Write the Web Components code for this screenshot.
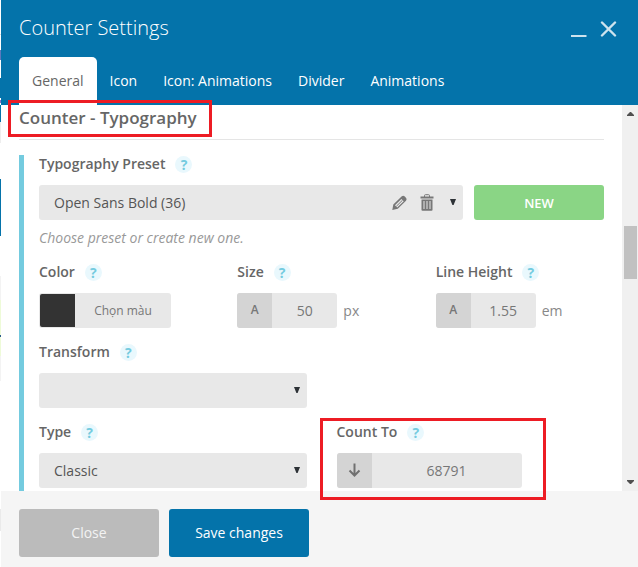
<!DOCTYPE html>
<html lang="en">
<head>
<meta charset="utf-8">
<title>Counter Settings</title>
<style>
  html, body { margin: 0; height: 100%; }
  body { font: 14px/18px "Open Sans", "Noto Sans", sans-serif; color: #666; background: #fff; }
</style>
</head>
<body>
<settings-dialog>
  <dialog-header slot="header" heading="Counter Settings">
    <dialog-tab selected>General</dialog-tab>
    <dialog-tab>Icon</dialog-tab>
    <dialog-tab>Icon: Animations</dialog-tab>
    <dialog-tab>Divider</dialog-tab>
    <dialog-tab>Animations</dialog-tab>
  </dialog-header>

  <field-section heading="Counter - Typography">
    <preset-field label="Typography Preset" value="Open Sans Bold (36)" hint="Choose preset or create new one."></preset-field>
    <field-row columns="3">
      <color-field label="Color" value="#333333" action="Chọn màu"></color-field>
      <number-field label="Size" value="50" unit="px" icon="letter"></number-field>
      <number-field label="Line Height" value="1.55" unit="em" icon="letter"></number-field>
    </field-row>
    <field-row columns="2">
      <select-field label="Transform" value=""></select-field>
    </field-row>
    <field-row columns="2">
      <select-field label="Type" value="Classic"></select-field>
      <number-field label="Count To" value="68791" icon="arrow" wide></number-field>
    </field-row>
  </field-section>

  <dialog-footer slot="footer">
    <push-button kind="muted">Close</push-button>
    <push-button kind="primary">Save changes</push-button>
  </dialog-footer>
</settings-dialog>

<script>
const FIELD_CSS = `
  :host { display: block; min-width: 0; }
  * { box-sizing: border-box; }
  .head { display: flex; align-items: center; gap: 10px; height: 18px; margin-bottom: 12px; }
  label { font-weight: 600; color: #666; white-space: nowrap; }
  input, select, button { font: inherit; color: inherit; margin: 0; border: 0; padding: 0; background: none; outline: none; }
  button { cursor: pointer; }
  svg { display: block; }
  .select { display: grid; grid-template-columns: minmax(0, 1fr) auto; align-items: center; height: 35px; border-radius: 3px; background: #e8e8e8; }
  .select > * { grid-row: 1; }
  .select select { grid-column: 1 / -1; width: 100%; height: 35px; padding: 0 75px 0 15px; appearance: none; color: #555; cursor: pointer; }
  .select .tools { grid-column: 2; display: flex; align-items: center; gap: 13px; padding-right: 7px; }
  .select .caret { pointer-events: none; margin: 0 0 2px 3px; }
`;
const CARET = `<svg class="caret" width="6" height="6" viewBox="0 0 6 6"><path d="M0 0h6L3.6 6H2.4z" fill="#2d3236"/></svg>`;

const define = (name, render) => customElements.define(name, class extends HTMLElement {
  constructor() {
    super();
    this.attachShadow({ mode: "open" });
  }
  connectedCallback() {
    const t = document.createElement("template");
    t.innerHTML = render(this, n => this.getAttribute(n) ?? "");
    this.shadowRoot.replaceChildren(t.content.cloneNode(true));
  }
});

define("settings-dialog", () => `
  <style>
    :host { display: grid; grid-template-columns: 1px minmax(0, 1fr); height: 100vh; position: relative; overflow: hidden; }
    .backdrop { background: linear-gradient(#fff 34px, #ddd 34px 35px, #fff 35px 50px, #5c78bd 50px 60px, #fff 60px 78px, #0473aa 78px 98px, #fff 98px 100px, #8f6fc0 100px 103px, #fff 103px 105px, #0473aa 105px 122px, #eee 122px 143px, #fff 143px 179px, #0473aa 179px 236px, #fff 236px 276px, #f3f3f3 276px 300px, #eefbd8 300px 335px, #2a5b8c 335px 337px, #eefbd8 337px 356px, #f3f3f3 356px 381px, #fff 381px 509px, #eaeaea 509px 531px, #fff 531px); }
    .frame { display: flex; flex-direction: column; min-height: 0; }
    .body { flex: 1; min-height: 0; display: flex; background: #fff; }
    .content { flex: 1; min-width: 0; overflow: hidden; }
  </style>
  <div class="backdrop"></div>
  <div class="frame">
    <slot name="header"></slot>
    <div class="body">
      <div class="content"><slot></slot></div>
      <scroll-rail></scroll-rail>
    </div>
    <slot name="footer"></slot>
  </div>
  <highlight-box style="left:8px;top:100px;width:204px;height:37px"></highlight-box>
  <highlight-box style="left:320px;top:418px;width:226px;height:82px"></highlight-box>
`);

define("highlight-box", () => `
  <style>:host { position: absolute; box-sizing: border-box; border: 3px solid #ed1c24; pointer-events: none; }</style>
`);

define("dialog-header", (el, a) => `
  <style>
    :host { display: block; background: #0473aa; color: #fff; }
    .bar { display: flex; justify-content: space-between; align-items: center; height: 56px; padding: 0 21px 1px 18px; }
    h1 { margin: 0; font-size: 20px; line-height: 28px; font-weight: 300; color: #fff; }
    .actions { display: flex; gap: 13px; padding-top: 2px; }
    button { display: block; border: 0; padding: 0; background: none; cursor: pointer; }
    svg { display: block; }
    nav { display: flex; padding: 0 18px; }
  </style>
  <div class="bar">
    <h1>${a("heading")}</h1>
    <div class="actions">
      <button type="button" aria-label="Minimize"><svg width="17" height="17" viewBox="0 0 17 17"><path d="M1 15h15.500" stroke="#cde3ee" stroke-width="2"/></svg></button>
      <button type="button" aria-label="Close dialog"><svg width="17" height="17" viewBox="0 0 17 17"><path d="M2 1.500l13 13M15 1.500l-13 13" stroke="#cde3ee" stroke-width="2.400" stroke-linecap="round"/></svg></button>
    </div>
  </div>
  <nav><slot></slot></nav>
`);

define("dialog-tab", () => `
  <style>
    :host { display: block; }
    button { display: block; height: 48px; padding: 0 13px; border: 0; border-radius: 5px 5px 0 0; background: none; font: inherit; color: #fff; cursor: pointer; white-space: nowrap; }
    :host([selected]) button { background: #fff; color: #666; }
  </style>
  <button type="button"><slot></slot></button>
`);

define("scroll-rail", () => `
  <style>
    :host { display: flex; flex-direction: column; width: 16px; background: #f0f0f0; }
    svg { display: block; }
    .track { flex: 1; padding: 104px 1px 0 2px; }
    .thumb { height: 53px; background: #c1c1c1; }
  </style>
  <svg width="16" height="17" viewBox="0 0 16 17"><path d="M5 11V10L8 7h1l3 3v1z" fill="#505050"/></svg>
  <div class="track"><div class="thumb"></div></div>
  <svg width="16" height="17" viewBox="0 0 16 17"><path d="M5 6h7v1L9 10H8L5 7z" fill="#505050"/></svg>
`);

define("field-section", (el, a) => `
  <style>
    :host { display: block; padding: 0 18px; }
    h2 { margin: 0 0 15px; height: 34px; border-bottom: 1px solid #e5e5e5; font-size: 17px; line-height: 26px; font-weight: 600; color: #666; }
    .fields { display: flex; flex-direction: column; gap: 15px; padding: 0 0 20px 15px; border-left: 5px solid #74cbdf; }
  </style>
  <h2>${a("heading")}</h2>
  <div class="fields"><slot></slot></div>
`);

define("field-row", (el, a) => `
  <style>:host { display: grid; grid-template-columns: repeat(${a("columns")}, minmax(0, 1fr)); column-gap: 30px; }</style>
  <slot></slot>
`);

define("help-badge", () => `
  <style>
    :host { display: block; }
    button { display: block; width: 17px; height: 17px; padding: 0; border: 0; border-radius: 50%; background: #e9f8fd; color: #74cbdf; font: 700 14px/17px "Open Sans", sans-serif; text-align: center; cursor: pointer; }
  </style>
  <button type="button" title="Help">?</button>
`);

define("select-field", (el, a) => `
  <style>${FIELD_CSS}</style>
  <div class="head"><label for="c">${a("label")}</label><help-badge></help-badge></div>
  <div class="select">
    <select id="c"><option>${a("value")}</option></select>
    <span class="tools" style="pointer-events:none">${CARET}</span>
  </div>
`);

define("preset-field", (el, a) => `
  <style>${FIELD_CSS}
    .line { display: flex; gap: 11px; }
    .select { flex: 1; min-width: 0; }
    .new { width: 130px; height: 35px; border-radius: 3px; background: #8ad585; color: #fff; font-size: 13px; font-weight: 600; }
    .tools { color: #777; }
    .hint { margin: 8px 0 0; line-height: 20px; font-style: italic; color: #999; }
  </style>
  <div class="head"><label for="c">${a("label")}</label><help-badge></help-badge></div>
  <div class="line">
    <div class="select">
      <select id="c"><option>${a("value")}</option></select>
      <span class="tools">
        <button type="button" aria-label="Edit preset"><svg width="15" height="16" viewBox="0 0 15 16"><path fill="currentColor" fill-rule="evenodd" d="M.3 15L1.300 9.500L9.800 1.300Q11.300 .3 12.800 1.500L14.300 3.200Q15 4.500 14 5.800L5.800 13.800zM3 10.300l2.200 2.200 6.500-6.300-2.300-2.300z"/><path d="M4.300 11.300l6.200-6.100" stroke="currentColor" stroke-width="1"/></svg></button>
        <button type="button" aria-label="Delete preset"><svg width="14" height="17" viewBox="0 0 14 17"><path d="M4.500 3V1.500Q4.500.7 5.500.7h3q1 0 1 .8V3" fill="none" stroke="currentColor"/><path d="M.5 2.500h13v2H.5z" fill="currentColor"/><path fill="currentColor" fill-rule="evenodd" d="M1.500 5.500h11V16q0 .8-1 .8h-9q-1 0-1-.8zM3.500 7v8h1V7zM6.500 7v8h1V7zM9.500 7v8h1V7z"/></svg></button>
        ${CARET}
      </span>
    </div>
    <button class="new" type="button">NEW</button>
  </div>
  <p class="hint">${a("hint")}</p>
`);

define("color-field", (el, a) => `
  <style>${FIELD_CSS}
    .color { display: inline-flex; height: 35px; padding: 1px 0 1px 1px; border-radius: 3px; background: #e8e8e8; vertical-align: top; }
    input { width: 35px; height: 33px; border-radius: 2px 0 0 2px; appearance: none; overflow: hidden; }
    input::-webkit-color-swatch-wrapper { padding: 0; }
    input::-webkit-color-swatch { border: 0; border-radius: 0; }
    .pick { width: 96px; font-size: 12px; color: #777; }
  </style>
  <div class="head"><label for="c">${a("label")}</label><help-badge></help-badge></div>
  <div class="color">
    <input id="c" type="color" value="${a("value")}">
    <button class="pick" type="button">${a("action")}</button>
  </div>
`);

const NUMBER_ICONS = {
  letter: `<span class="letter">A</span>`,
  arrow: `<svg width="13" height="14" viewBox="0 0 13 14"><path d="M6.500 0.500v12M1.500 7.500l5 5 5-5" fill="none" stroke="#707070" stroke-width="2"/></svg>`
};
define("number-field", (el, a) => `
  <style>${FIELD_CSS}
    .line { display: flex; align-items: center; gap: 6px; }
    .box { display: flex; height: 35px; border-radius: 3px; overflow: hidden; background: #e8e8e8; }
    .addon { display: flex; align-items: center; justify-content: center; width: 35px; padding-bottom: 2px; background: #d4d4d4; }
    .letter { font-size: 12px; font-weight: 600; color: #777; }
    input { width: 65px; text-align: center; color: #777; }
    :host([wide]) input { width: 150px; }
    .unit { color: #888; }
  </style>
  <div class="head"><label for="c">${a("label")}</label><help-badge></help-badge></div>
  <div class="line">
    <div class="box">
      <span class="addon">${NUMBER_ICONS[a("icon")]}</span>
      <input id="c" type="text" inputmode="decimal" value="${a("value")}">
    </div>
    ${a("unit") ? `<span class="unit">${a("unit")}</span>` : ""}
  </div>
`);

define("dialog-footer", () => `
  <style>:host { display: flex; gap: 10px; padding: 18px 18px 10px; background: #f5f5f5; }</style>
  <slot></slot>
`);

define("push-button", () => `
  <style>
    :host { display: block; }
    button { display: block; width: 140px; height: 48px; border: 0; border-radius: 3px; background: #0473aa; color: #fff; font: inherit; font-weight: 500; cursor: pointer; }
    :host([kind="muted"]) button { background: #bbb; color: #f3f3f3; }
  </style>
  <button type="button"><slot></slot></button>
`);
</script>
</body>
</html>
